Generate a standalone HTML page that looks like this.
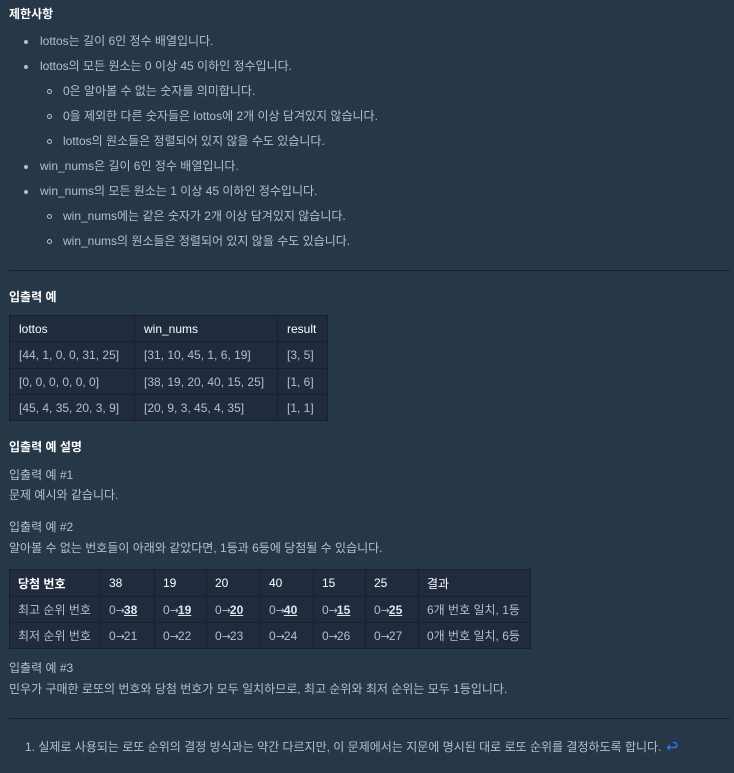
<!DOCTYPE html>
<html><head><meta charset="utf-8"><style>
*{margin:0;padding:0;box-sizing:border-box}
body{width:734px;height:773px;background:#263747;color:#b2c0cc;font-family:"Liberation Sans","Noto Sans CJK KR",sans-serif;font-size:12px;position:relative;overflow:hidden}
.a{position:absolute;white-space:nowrap;line-height:16px}
.h{color:#fff;font-weight:bold}
.d{position:absolute;width:4px;height:4px;border-radius:50%;background:#b2c0cc}
.c{position:absolute;width:5px;height:5px;border-radius:50%;border:1px solid #b2c0cc}
.hr{position:absolute;left:9px;right:4px;height:1px;background:#172130}
table{position:absolute;border-collapse:collapse;background:#202b3d}
td{border:1px solid #172130;padding:0 9px;white-space:nowrap;color:#b2c0cc}
tr:first-child td{color:#fff}
.t2 td{padding:0 8px}
b u{color:#dfe6ec}
i{font-style:normal;font-family:"DejaVu Sans",sans-serif;font-size:11px;letter-spacing:-1px}
</style></head><body>
<div class="a h" style="left:9px;top:6px">제한사항</div>
<div class="d" style="left:24px;top:40px"></div><div class="a" style="left:40px;top:33px">lottos는 길이 6인 정수 배열입니다.</div>
<div class="d" style="left:24px;top:65px"></div><div class="a" style="left:40px;top:58px">lottos의 모든 원소는 0 이상 45 이하인 정수입니다.</div>
<div class="c" style="left:47px;top:89px"></div><div class="a" style="left:63px;top:83px">0은 알아볼 수 없는 숫자를 의미합니다.</div>
<div class="c" style="left:47px;top:114px"></div><div class="a" style="left:63px;top:108px">0을 제외한 다른 숫자들은 lottos에 2개 이상 담겨있지 않습니다.</div>
<div class="c" style="left:47px;top:139px"></div><div class="a" style="left:63px;top:133px">lottos의 원소들은 정렬되어 있지 않을 수도 있습니다.</div>
<div class="d" style="left:24px;top:165px"></div><div class="a" style="left:40px;top:158px">win_nums은 길이 6인 정수 배열입니다.</div>
<div class="d" style="left:24px;top:190px"></div><div class="a" style="left:40px;top:183px">win_nums의 모든 원소는 1 이상 45 이하인 정수입니다.</div>
<div class="c" style="left:47px;top:214px"></div><div class="a" style="left:63px;top:208px">win_nums에는 같은 숫자가 2개 이상 담겨있지 않습니다.</div>
<div class="c" style="left:47px;top:239px"></div><div class="a" style="left:63px;top:233px">win_nums의 원소들은 정렬되어 있지 않을 수도 있습니다.</div>
<div class="hr" style="top:270px"></div>
<div class="a h" style="left:9px;top:289px">입출력 예</div>
<table style="left:9px;top:315px;width:319px">
<tr style="height:26px"><td style="width:125px">lottos</td><td style="width:143px">win_nums</td><td>result</td></tr>
<tr style="height:27px"><td>[44, 1, 0, 0, 31, 25]</td><td>[31, 10, 45, 1, 6, 19]</td><td>[3, 5]</td></tr>
<tr style="height:26px"><td>[0, 0, 0, 0, 0, 0]</td><td>[38, 19, 20, 40, 15, 25]</td><td>[1, 6]</td></tr>
<tr style="height:26px"><td>[45, 4, 35, 20, 3, 9]</td><td>[20, 9, 3, 45, 4, 35]</td><td>[1, 1]</td></tr>
</table>
<div class="a h" style="left:9px;top:439px">입출력 예 설명</div>
<div class="a" style="left:9px;top:467px">입출력 예 #1</div>
<div class="a" style="left:9px;top:487px">문제 예시와 같습니다.</div>
<div class="a" style="left:9px;top:519px">입출력 예 #2</div>
<div class="a" style="left:9px;top:540px">알아볼 수 없는 번호들이 아래와 같았다면, 1등과 6등에 당첨될 수 있습니다.</div>
<table class="t2" style="left:9px;top:569px;width:522px">
<tr style="height:27px"><td style="width:91px;font-weight:bold">당첨 번호</td><td style="width:54px">38</td><td style="width:52px">19</td><td style="width:54px">20</td><td style="width:53px">40</td><td style="width:52px">15</td><td style="width:53px">25</td><td>결과</td></tr>
<tr style="height:26px"><td>최고 순위 번호</td><td>0<i>→</i><b><u>38</u></b></td><td>0<i>→</i><b><u>19</u></b></td><td>0<i>→</i><b><u>20</u></b></td><td>0<i>→</i><b><u>40</u></b></td><td>0<i>→</i><b><u>15</u></b></td><td>0<i>→</i><b><u>25</u></b></td><td>6개 번호 일치, 1등</td></tr>
<tr style="height:26px"><td>최저 순위 번호</td><td>0<i>→</i>21</td><td>0<i>→</i>22</td><td>0<i>→</i>23</td><td>0<i>→</i>24</td><td>0<i>→</i>26</td><td>0<i>→</i>27</td><td>0개 번호 일치, 6등</td></tr>
</table>
<div class="a" style="left:9px;top:660px">입출력 예 #3</div>
<div class="a" style="left:9px;top:681px">민우가 구매한 로또의 번호와 당첨 번호가 모두 일치하므로, 최고 순위와 최저 순위는 모두 1등입니다.</div>
<div class="hr" style="top:718px"></div>
<div class="a" style="left:25px;top:739px">1. 실제로 사용되는 로또 순위의 결정 방식과는 약간 다르지만, 이 문제에서는 지문에 명시된 대로 로또 순위를 결정하도록 합니다.</div>
<svg class="a" style="left:665px;top:741px" width="13" height="12" viewBox="0 0 13 12"><path d="M8 1.5h1.5a2.5 2.5 0 0 1 0 5H2.5M5 4L2.5 6.5 5 9" fill="none" stroke="#2f7bf5" stroke-width="1.3"/></svg>
</body></html>
